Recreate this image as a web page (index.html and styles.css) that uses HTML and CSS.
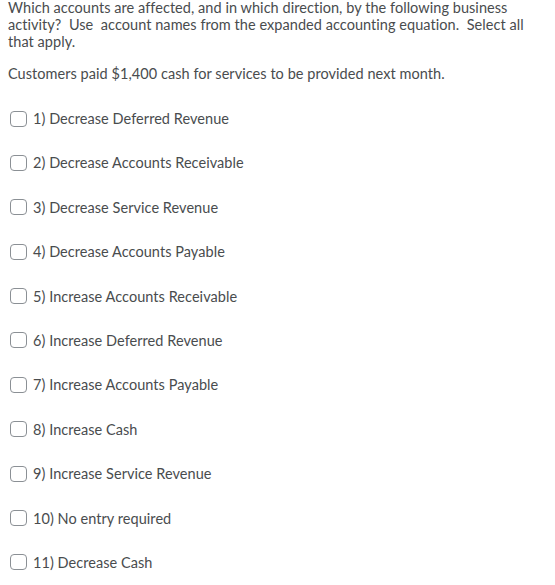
FILE: index.html
```html
<!DOCTYPE html>
<html>
<head>
<meta charset="utf-8">
<link rel="stylesheet" href="styles.css">
</head>
<body>
<div class="question">
  <p class="prompt">Which accounts are affected, and in which direction, by the following business activity?&nbsp; Use&nbsp; account names from the expanded accounting equation.&nbsp; Select all that apply.</p>
  <p class="scenario">Customers paid $1,400 cash for services to be provided next month.</p>
  <ul class="options">
    <li class="option"><span class="box"></span><span class="label">1) Decrease Deferred Revenue</span></li>
    <li class="option"><span class="box"></span><span class="label">2) Decrease Accounts Receivable</span></li>
    <li class="option"><span class="box"></span><span class="label">3) Decrease Service Revenue</span></li>
    <li class="option"><span class="box"></span><span class="label">4) Decrease Accounts Payable</span></li>
    <li class="option"><span class="box"></span><span class="label">5) Increase Accounts Receivable</span></li>
    <li class="option"><span class="box"></span><span class="label">6) Increase Deferred Revenue</span></li>
    <li class="option"><span class="box"></span><span class="label">7) Increase Accounts Payable</span></li>
    <li class="option"><span class="box"></span><span class="label">8) Increase Cash</span></li>
    <li class="option"><span class="box"></span><span class="label">9) Increase Service Revenue</span></li>
    <li class="option"><span class="box"></span><span class="label">10) No entry required</span></li>
    <li class="option"><span class="box"></span><span class="label">11) Decrease Cash</span></li>
  </ul>
</div>
</body>
</html>
```
FILE: styles.css
```css
html, body {
  margin: 0;
  padding: 0;
  background: #ffffff;
}
body {
  font-family: Lato, "Liberation Sans", sans-serif;
  font-size: 14.5px;
  letter-spacing: 0.05px;
  color: #494c4e;
}
.question {
  padding: 0 8px;
  width: 530px;
}
.prompt {
  margin: -1px 0 0 0;
  line-height: 17px;
}
.scenario {
  margin: 15px 0 0 0;
  line-height: 17px;
}
.options {
  list-style: none;
  margin: 28px 0 0 0;
  padding: 0;
  display: flex;
  flex-direction: column;
  gap: 27.4px;
}
.option {
  display: flex;
  align-items: center;
  gap: 6px;
  height: 17px;
  padding-left: 2px;
}
.box {
  flex: 0 0 auto;
  width: 17px;
  height: 16px;
  border: 1px solid #8b9095;
  border-radius: 4px;
  box-sizing: border-box;
}
.label {
  line-height: 17px;
}
```
